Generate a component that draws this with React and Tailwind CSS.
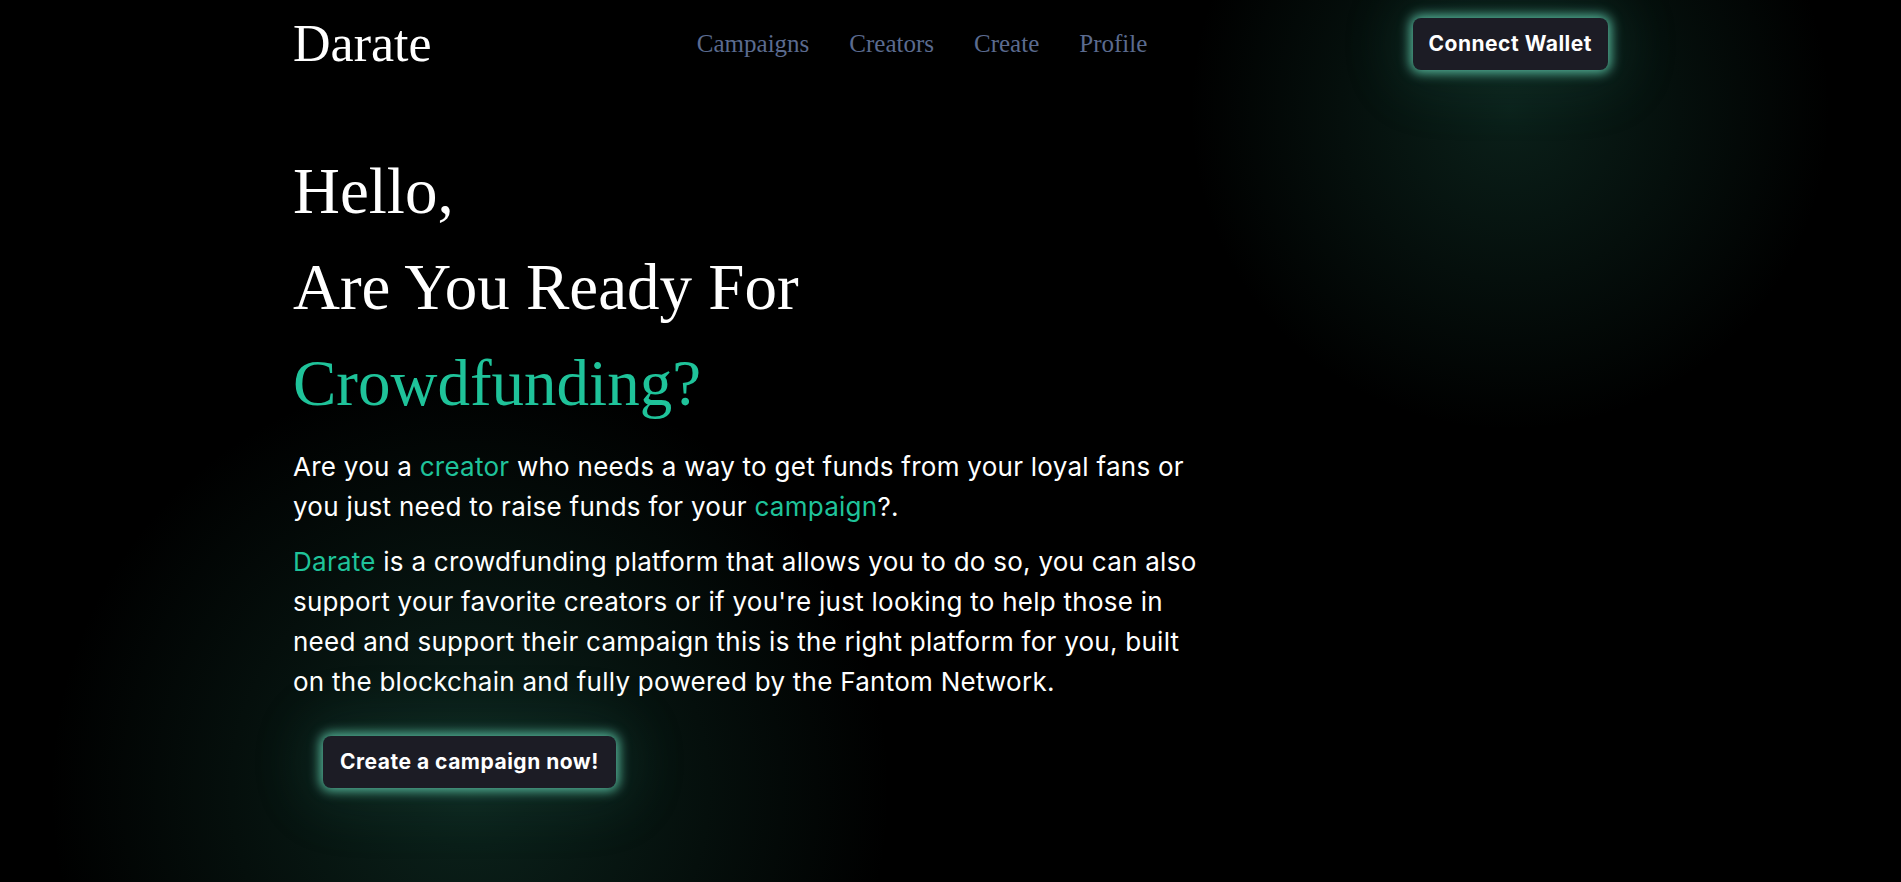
import React from 'react'

const navLinks = ['Campaigns', 'Creators', 'Create', 'Profile']

const glowButton =
  'rounded-lg bg-[#1c1c25] text-white font-bold text-[21px] tracking-[0.5px] h-[52px] shadow-[0_0_12px_3px_rgba(94,200,170,0.9),0_0_60px_18px_rgba(60,160,130,0.12)] font-["Inter",sans-serif]'

export default function App() {
  return (
    <div className="min-h-screen bg-black bg-[radial-gradient(circle_at_1510px_110px,rgba(38,115,92,0.28),transparent_320px),radial-gradient(circle_at_470px_790px,rgba(38,115,92,0.3),transparent_420px)]">
      <div className="max-w-[1315px] mx-auto">
        {/* Header */}
        <header className="flex items-center justify-between pt-[18px]">
          <a href="#" className='text-white text-[52px] leading-none font-["Liberation_Serif",serif]'>
            Darate
          </a>
          <nav className="flex items-center gap-[40px]">
            {navLinks.map((link) => (
              <a
                key={link}
                href="#"
                className='text-[#5b6b8f] text-[25px] font-["Liberation_Serif",serif] hover:text-white'
              >
                {link}
              </a>
            ))}
          </nav>
          <button className={`${glowButton} px-4`}>Connect Wallet</button>
        </header>

        {/* Hero */}
        <section className="mt-[73px] w-[920px]">
          <h1 className='text-white text-[65px] leading-[96px] font-["Liberation_Serif",serif]'>
            Hello,
            <br />
            Are You Ready For
            <br />
            <span className="text-[#1fc39a]">Crowdfunding?</span>
          </h1>

          <div className='mt-4 text-white text-[26px] leading-[40px] tracking-[0.01em] font-["Inter",sans-serif]'>
            <p className="mb-[15px]">
              Are you a <span className="text-[#1fc39a]">creator</span> who needs a way to get funds from
              your loyal fans or you just need to raise funds for your{' '}
              <span className="text-[#1fc39a]">campaign</span>?.
            </p>
            <p>
              <span className="text-[#1fc39a]">Darate</span> is a crowdfunding platform that allows you to
              do so, you can also support your favorite creators or if you're just looking to help those in
              need and support their campaign this is the right platform for you, built on the blockchain and
              fully powered by the Fantom Network.
            </p>
          </div>

          <button className={`${glowButton} px-[17px] mt-[34px] ml-[30px]`}>Create a campaign now!</button>
        </section>
      </div>
    </div>
  )
}
